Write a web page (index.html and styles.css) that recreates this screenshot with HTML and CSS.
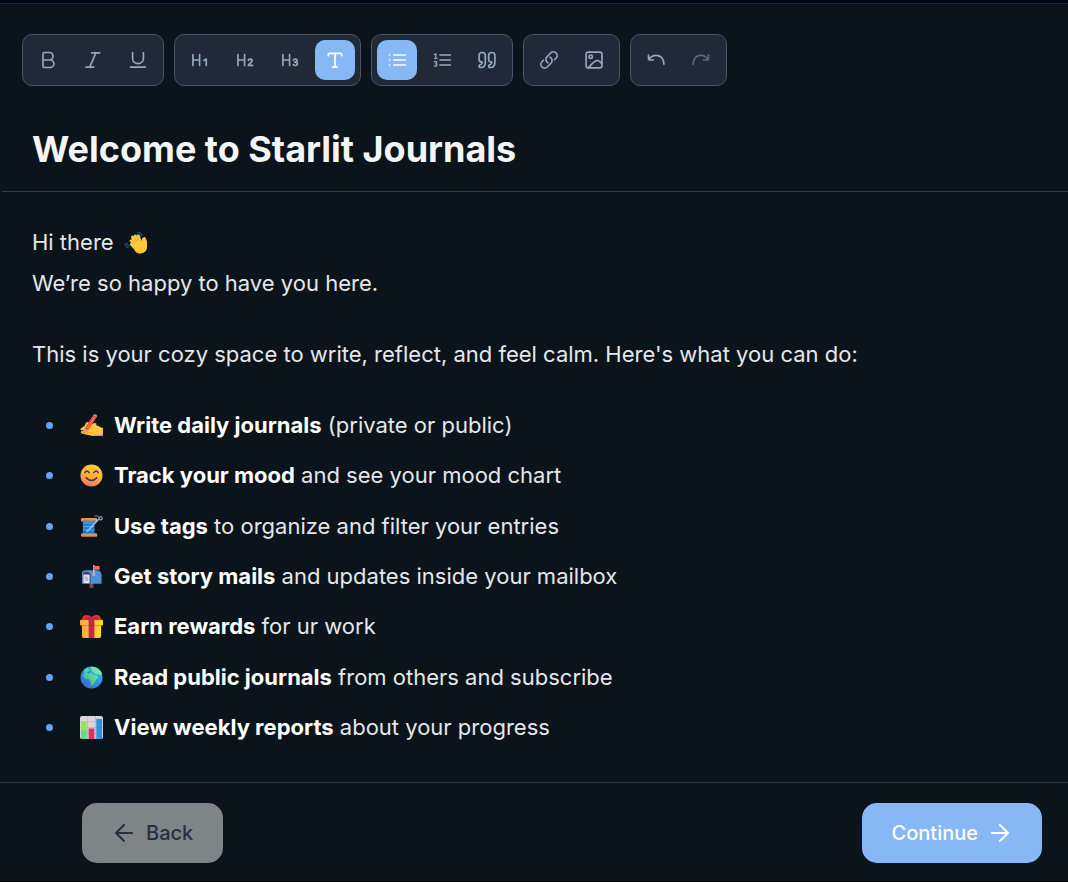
FILE: index.html
```html
<!DOCTYPE html>
<html lang="en">
<head>
<meta charset="utf-8">
<meta name="viewport" content="width=device-width, initial-scale=1">
<title>Starlit Journals</title>
<link rel="stylesheet" href="styles.css">
</head>
<body>
<div class="editor">
  <div class="toolbar" role="toolbar" aria-label="Formatting">
    <div class="group">
      <button class="tool" type="button" aria-label="Bold"><svg class="icon" viewBox="0 0 24 24"><path d="M6 6C6 4.600 6 3.900 6.400 3.400C6.900 3 7.600 3 9 3H13.600C16 3 18 5 18 7.500S16 12 13.600 12H6ZM13.400 12H14.700C17 12 19 14 19 16.500S17 21 14.700 21H9C7.600 21 6.900 21 6.400 20.600C6 20.100 6 19.400 6 18V12"/></svg></button>
      <button class="tool" type="button" aria-label="Italic"><svg class="icon" viewBox="0 0 24 24"><path d="M10.500 3.500H20M8 20.500L15.500 3.500M3.500 20.500H13"/></svg></button>
      <button class="tool" type="button" aria-label="Underline"><svg class="icon" viewBox="0 0 24 24"><path d="M5.500 3V10C5.500 13.600 8.400 16.300 12 16.300S18.500 13.600 18.500 10V3M3 20.500H21"/></svg></button>
    </div>
    <div class="group">
      <button class="tool" type="button" aria-label="Heading 1"><svg class="icon" viewBox="0 0 24 24"><path d="M3.500 5.500V18.500M11.500 5.500V18.500M3.500 12H11.500M16.500 12.500L19.500 10.800V18.500"/></svg></button>
      <button class="tool" type="button" aria-label="Heading 2"><svg class="icon" viewBox="0 0 24 24"><path d="M3.500 5.500V18.500M11.500 5.500V18.500M3.500 12H11.500M16 12.500C16.200 10.500 20.500 10.300 20.500 12.800C20.500 14.800 17 15.800 16 18.500H21"/></svg></button>
      <button class="tool" type="button" aria-label="Heading 3"><svg class="icon" viewBox="0 0 24 24"><path d="M3.500 5.500V18.500M11.500 5.500V18.500M3.500 12H11.500M16 12C17 10.500 20.500 10.500 20.500 12.600C20.500 14.300 18.800 14.500 17.500 14.500C19 14.500 21 14.800 21 16.600C21 19 17.500 19.200 16 17.600"/></svg></button>
      <button class="tool active" type="button" aria-label="Text" aria-pressed="true"><svg class="icon" viewBox="0 0 24 24"><path d="M12 4V20.500M9 20.500H15M4 7V5.500C4 4.500 4.500 4 5.500 4H18.500C19.500 4 20 4.500 20 5.500V7"/></svg></button>
    </div>
    <div class="group">
      <button class="tool active" type="button" aria-label="Bullet list" aria-pressed="true"><svg class="icon" viewBox="0 0 24 24"><path d="M8 6H22M8 12H22M8 18H22M3 6H3.100M3 12H3.100M3 18H3.100"/></svg></button>
      <button class="tool" type="button" aria-label="Numbered list"><svg class="icon" viewBox="0 0 24 24"><path d="M9.500 6H22M9.500 12H22M9.500 18H22"/><path class="fine" d="M2.800 5.500L4.600 4.500V10M3 10H6M2.800 14.300C3.500 13 6 13.500 5.800 15C5.700 16 4.500 16.500 4 16.500C5 16.500 6.200 17 5.800 18.400C5.300 20 3.300 19.700 2.800 18.700"/></svg></button>
      <button class="tool" type="button" aria-label="Quote"><svg class="icon" viewBox="0 0 24 24"><path d="M10 6.500V14C10 18 8.300 21 4.700 21C3.500 21 2.500 20.300 2.500 19.200C2.500 18.200 3.300 17.700 4.300 17.500C5.600 17.200 6.200 16.500 6.300 14.500C3.800 14.500 2.500 13.500 2.500 11V6.500C2.500 4 3.800 3 6.300 3S10 4 10 6.500ZM21.500 6.500V14C21.500 18 19.800 21 16.200 21C15 21 14 20.300 14 19.200C14 18.200 14.800 17.700 15.800 17.500C17.100 17.200 17.700 16.500 17.800 14.500C15.300 14.500 14 13.500 14 11V6.500C14 4 15.300 3 17.800 3S21.500 4 21.500 6.500Z"/></svg></button>
    </div>
    <div class="group">
      <button class="tool" type="button" aria-label="Link"><svg class="icon" viewBox="0 0 24 24"><path d="M13.190 8.688a4.500 4.500 0 0 1 1.242 7.244l-4.500 4.500a4.500 4.500 0 0 1-6.364-6.364l1.757-1.757m13.350-.622 1.757-1.757a4.500 4.500 0 0 0-6.364-6.364l-4.500 4.500a4.500 4.500 0 0 0 1.242 7.244"/></svg></button>
      <button class="tool" type="button" aria-label="Image"><svg class="icon" viewBox="0 0 24 24"><rect x="2.500" y="2.500" width="19" height="19" rx="2.500"/><circle cx="8" cy="8" r="2"/><path d="M5.500 21.300C9 17 13 12.500 16 12.500C18 12.500 19.500 14.500 21.500 16.500"/></svg></button>
    </div>
    <div class="group">
      <button class="tool" type="button" aria-label="Undo"><svg class="icon" viewBox="0 0 24 24"><path d="M3 6V10.500C3 11.500 3.300 12 4.300 12H9M3.500 11.500C5.500 8.300 8.500 6.500 12 6.500C17 6.500 21 10 21.500 17"/></svg></button>
      <button class="tool" type="button" aria-label="Redo" disabled><svg class="icon" viewBox="0 0 24 24"><path d="M21 6V10.500C21 11.500 20.700 12 19.700 12H15M20.500 11.500C18.500 8.300 15.500 6.500 12 6.500C7 6.500 3 10 2.500 17"/></svg></button>
    </div>
  </div>

  <header class="title">
    <h1>Welcome to Starlit Journals</h1>
  </header>

  <main class="content">
    <p>Hi there
      <svg class="emoji" viewBox="0 0 24 24" role="img" aria-label="Waving hand"><path d="M1 12.500Q1 17 5 17.500M3 12Q3.200 15 6 15.500M14 1.500Q18 1.500 19 5.500M14 3.500Q16.500 3.500 17.500 6" fill="none" stroke="#17548c" stroke-width="1.200"/><path d="M6 11C5 9.500 7 8 8.200 9.300L7.500 7C7 5 9.300 4 10.200 5.600C10 3.300 12.500 2.800 13.300 4.700C14 3 16 3.600 16.500 5.200L18.500 11C18 8.500 19.500 6 21.500 6.300C23 6.600 23 9 24 11V17C24 21 20.500 23.500 17 23.500C14 23.500 12 21.500 10.500 19L6.800 15C5.500 13.300 6.500 12 7.800 12.500Z" fill="#ffc83d"/><path d="M8.200 9.300L11.300 13M10.200 5.600L13.200 11.500M13.300 4.700L15.500 10.500" fill="none" stroke="#e39b2c" stroke-width=".8"/><path d="M10.500 19C12.500 22 15 23 18 23.300C15 24.200 11.500 22.500 10.500 19Z" fill="#f38b45"/></svg><br>
      We’re so happy to have you here.</p>
    <p>This is your cozy space to write, reflect, and feel calm. Here's what you can do:</p>
    <ul class="features">
      <li><svg class="emoji" viewBox="0 0 24 24" role="img" aria-label="Writing hand"><path d="M1 15L5 12L6 9.500C7 8 9.500 8 9.500 10L9 12L15 9.500C17 9 18 11 16.500 12L18 12C20.500 12.500 21 14.500 24 14.500V23H13L5 21C2 20.500 0 20 1.500 18L5 17L1.500 17C0 16.500 0 15.500 1 15Z" fill="#ffc83d"/><path d="M13 23C16 20 20 23 24 20V23Z" fill="#ef83a1"/><path d="M1 18.500L7 20L14 19.500" fill="none" stroke="#e99e24" stroke-width="1"/><path d="M13.500 1.500L17.500 3L8.500 17L4 20.500L5 15Z" fill="#e9503e"/><path d="M13.500 1.500Q14.500-.5 16.500.5T17.500 3Z" fill="#ef8396"/><path d="M5 15L8.500 17L4 20.500Z" fill="#efa36c"/><path d="M14.500 4L7.500 15" stroke="#ff8269" stroke-width="1"/></svg><span><strong>Write daily journals</strong> (private or public)</span></li>
      <li><svg class="emoji" viewBox="0 0 24 24" role="img" aria-label="Smiling face"><defs><linearGradient id="face" x1=".7" y1="0" x2=".4" y2="1"><stop offset="0" stop-color="#ffce3c"/><stop offset=".6" stop-color="#ffaa3a"/><stop offset="1" stop-color="#ee7167"/></linearGradient></defs><circle cx="12" cy="12" r="11.500" fill="url(#face)"/><path d="M5 9Q7.200 5.800 9.500 9M14.500 9Q16.800 5.800 19 9M6.500 14.500Q12 20 17.500 14.500" fill="none" stroke="#4a3247" stroke-width="1.600" stroke-linecap="round"/></svg><span><strong>Track your mood</strong> and see your mood chart</span></li>
      <li><svg class="emoji" viewBox="0 0 24 24" role="img" aria-label="Thread"><path d="M3 6H15V19H3Z" fill="#167bd3"/><path d="M3 8.500H15M3 12H15M3 15.500H15" stroke="#43a4ef" stroke-width="1.400"/><rect x="1" y="3" width="17" height="4" rx="1.500" fill="#d39a60"/><rect x="1" y="19" width="17" height="4" rx="1.500" fill="#d39a60"/><path d="M2 6.300H17M2 22.300H17" stroke="#a26239" stroke-width="1"/><path d="M15 1Q19 0 20 3.500" fill="none" stroke="#236ca4" stroke-width="1.300"/><path d="M7 17.500L19.500 4.500" stroke="#b9c0d2" stroke-width="1.500"/><circle cx="21.500" cy="3.500" r="1.700" fill="none" stroke="#a7afc0" stroke-width="1.200"/></svg><span><strong>Use tags</strong> to organize and filter your entries</span></li>
      <li><svg class="emoji" viewBox="0 0 24 24" role="img" aria-label="Mailbox"><path d="M10 18H14V24H10Z" fill="#73474c"/><path d="M2 9Q2 5.500 6 5.500H18Q22.500 6 22.500 11V19.500H2Z" fill="#4b92d8"/><path d="M3 10Q3 7 6.500 7T11 10V19H3Z" fill="#503b71"/><path d="M3.500 10H10V19H3.500Z" fill="#e9dff0"/><path d="M5 11.500L8.500 12.500V17L5 16Z" fill="#bfadd0"/><path d="M14.500 0V10.500" stroke="#c6bdcf" stroke-width="1.500"/><circle cx="14.500" cy="10" r="1.500" fill="#bdb1c7"/><path d="M15 1H20.500V5H15Z" fill="#f66d3e"/></svg><span><strong>Get story mails</strong> and updates inside your mailbox</span></li>
      <li><svg class="emoji" viewBox="0 0 24 24" role="img" aria-label="Gift"><defs><linearGradient id="box"><stop stop-color="#f5a83f"/><stop offset="1" stop-color="#ffdc26"/></linearGradient></defs><path d="M2 9H22V22Q22 24 20 24H4Q2 24 2 22Z" fill="url(#box)"/><rect x="0" y="5" width="24" height="6" rx="1" fill="url(#box)"/><path d="M2 11H22" stroke="#d78f24" stroke-width="1"/><path d="M2 5Q2 0 7 0Q10 0 12 2Q14 0 17 0Q22 0 22 5Z" fill="#e62d43"/><path d="M9 2H15V24H9Z" fill="#c5264e"/><path d="M5 4Q7 1 10 4ZM14 4Q17 1 19 4Z" fill="#b41c35"/></svg><span><strong>Earn rewards</strong> for ur work</span></li>
      <li><svg class="emoji" viewBox="0 0 24 24" role="img" aria-label="Globe"><defs><linearGradient id="sea" x1="1" y1="0" x2="0" y2="1"><stop stop-color="#32c6f5"/><stop offset=".5" stop-color="#2c94e8"/><stop offset="1" stop-color="#4a57c5"/></linearGradient><linearGradient id="land" x1="1" y1="0" x2="0" y2="1"><stop stop-color="#79ffb1"/><stop offset="1" stop-color="#42a979"/></linearGradient></defs><circle cx="12" cy="12" r="11.500" fill="url(#sea)"/><path d="M8 2L10 4L7 7L9 8L12 7L14 9L18 10L19 13L17 14L15 18L12 21L11 17L10 14L5 13L3 10L5 7L4 5Q5.500 3 8 2ZM11 1Q19 0 23 8L21 10L19 8L17 9L14 7L12 5Z" fill="url(#land)"/></svg><span><strong>Read public journals</strong> from others and subscribe</span></li>
      <li><svg class="emoji" viewBox="0 0 24 24" role="img" aria-label="Bar chart"><rect width="24" height="24" rx="2" fill="#ddd4e2"/><path d="M0 6H24M0 12H24M0 18H24M8 0V24M16 0V24" stroke="#b8afbf" stroke-width=".8"/><path d="M1 6H7V24H1Z" fill="#9be252"/><path d="M1 15H7V24H1Z" fill="#65da90"/><path d="M9 13H15V24H9Z" fill="#e72d69"/><path d="M17 3H23V24H17Z" fill="#2d94e2"/></svg><span><strong>View weekly reports</strong> about your progress</span></li>
    </ul>
  </main>

  <footer class="footer">
    <button class="nav back" type="button" disabled><svg class="arrow" viewBox="0 0 20 20"><path d="M18 10H2M10 2L2 10L10 18"/></svg>Back</button>
    <button class="nav next" type="button">Continue<svg class="arrow" viewBox="0 0 20 20"><path d="M2 10H18M10 2L18 10L10 18"/></svg></button>
  </footer>
</div>
</body>
</html>
```
FILE: styles.css
```css
* { box-sizing: border-box; }

body {
  margin: 0;
  background: #0b141a;
  color: #e5e7eb;
  font-family: Inter, "Liberation Sans", sans-serif;
}

button { font: inherit; border: 0; padding: 0; }

.editor {
  display: flex;
  flex-direction: column;
  min-height: 100vh;
  border-top: 3px solid #020817;
  border-bottom: 1px solid #000;
}

.toolbar {
  display: flex;
  flex-wrap: wrap;
  gap: 10px;
  padding: 30px 22px 0;
  border-top: 1px solid #1c2731;
}

.group {
  display: flex;
  gap: 5px;
  padding: 5px;
  background: #202938;
  border: 1px solid #4b5563;
  border-radius: 10px;
}

.tool {
  display: flex;
  align-items: center;
  justify-content: center;
  width: 40px;
  height: 40px;
  border-radius: 10px;
  background: transparent;
  color: #94a9bc;
}

.tool.active { background: #87b7f5; color: #fff; }
.tool:disabled { opacity: .5; }

.icon {
  width: 20px;
  height: 20px;
  fill: none;
  stroke: currentColor;
  stroke-width: 2;
  stroke-linecap: round;
  stroke-linejoin: round;
}

.icon .fine { stroke-width: 1.5; }

.title {
  margin-left: 2px;
  padding: 38px 30px 17px;
  border-bottom: 1px solid #2f3d4b;
}

.title h1 {
  margin: 0;
  color: #f3f4f6;
  font-size: 36px;
  font-weight: 700;
  line-height: 50px;
}

.content {
  flex: 1;
  display: flex;
  flex-direction: column;
  gap: 30px;
  padding: 30px 32px 34px;
  font-size: 22px;
  line-height: 41px;
}

.content p { margin: 0; }

.emoji {
  flex: none;
  width: 23px;
  height: 23px;
  margin: 0 4px;
  vertical-align: -4px;
}

.features {
  flex: 1;
  display: flex;
  flex-direction: column;
  justify-content: space-between;
  gap: 5px;
  margin: 0;
  padding: 0 0 0 14px;
  list-style: none;
}

.features li { display: flex; align-items: center; }

.features li::before {
  content: "";
  flex: none;
  width: 7px;
  height: 7px;
  margin-right: 27px;
  border-radius: 50%;
  background: #60a5fa;
}

.features .emoji { margin: 0 11px 0 0; }
.features strong { color: #fff; font-weight: 700; }

.footer {
  display: flex;
  justify-content: space-between;
  padding: 20px 26px 18px 82px;
  border-top: 1px solid #23394a;
}

.nav {
  display: flex;
  align-items: center;
  gap: 12px;
  height: 60px;
  border-radius: 15px;
  font-size: 20px;
  font-weight: 500;
}

.nav.back { padding: 0 30px 0 32px; background: #7f8487; color: #272f3f; }
.nav.next { padding: 0 32px 0 30px; background: #87b7f5; color: #fff; }

.arrow {
  width: 20px;
  height: 20px;
  fill: none;
  stroke: currentColor;
  stroke-width: 2;
  stroke-linecap: round;
  stroke-linejoin: round;
}
```
